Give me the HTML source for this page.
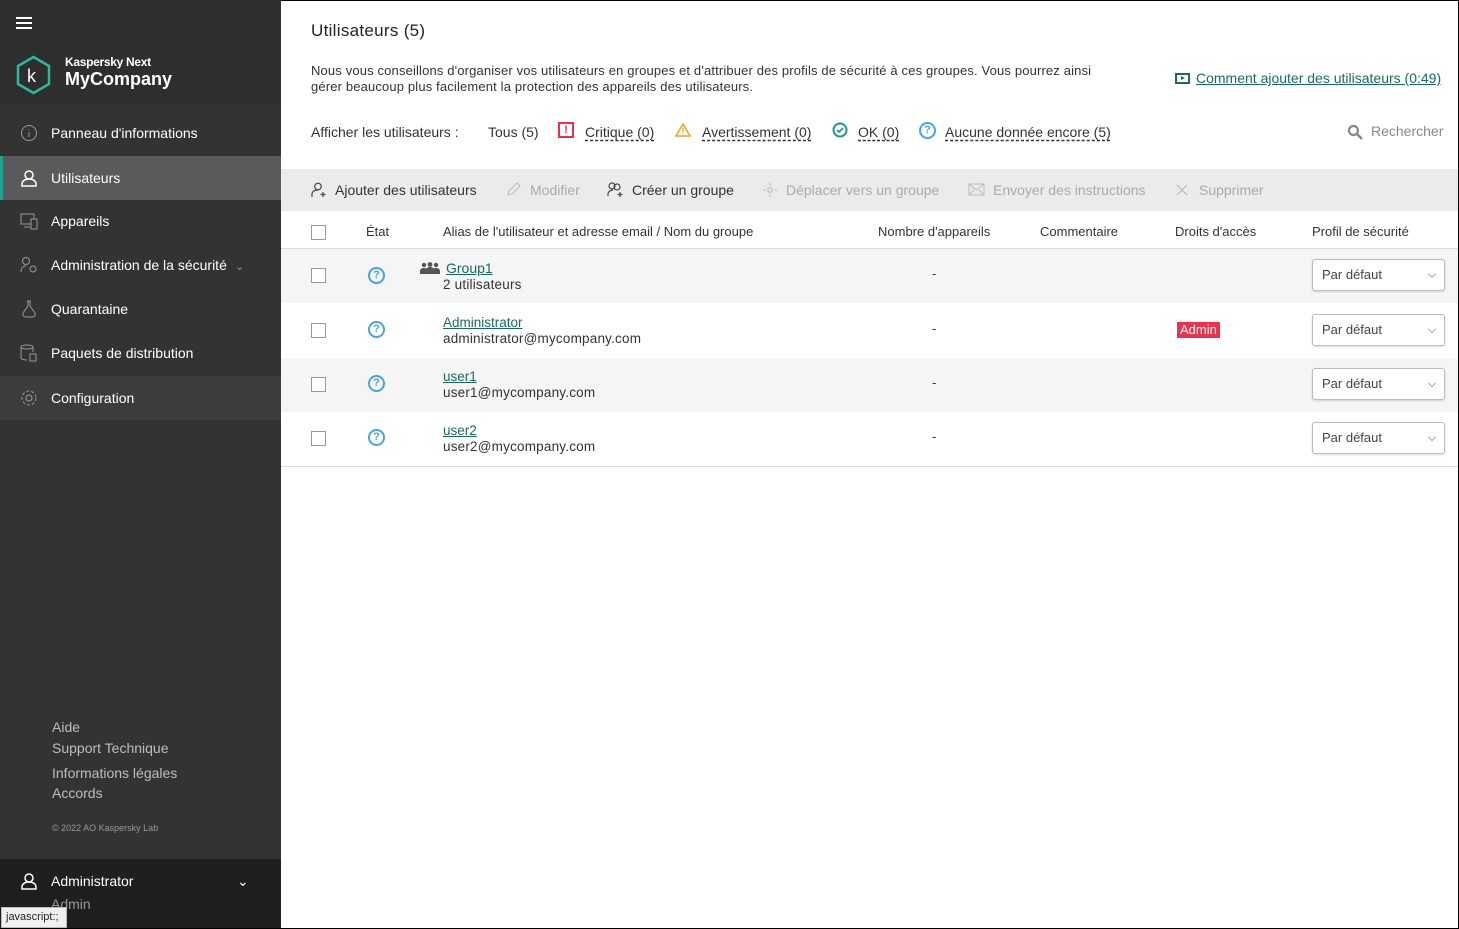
<!DOCTYPE html>
<html><head><meta charset="utf-8"><style>
*{box-sizing:border-box;margin:0;padding:0}
body{width:1459px;height:929px;overflow:hidden;font-family:"Liberation Sans",sans-serif;background:#fff;position:relative;color:#222}
.a{position:absolute}
#sb{left:0;top:0;width:281px;height:929px;background:#333}
.nav{position:absolute;left:0;width:281px;height:44px;color:#fff;font-size:14px;line-height:44px;padding-left:51px}
.nav svg{position:absolute;left:20px;top:13px}
.ft{color:#bdbdbd;font-size:14px;left:52px}
.tx{font-size:13px;color:#333;letter-spacing:.15px}
.lk{color:#1a6b5e;text-decoration:underline dashed;text-underline-offset:3px}
.tb{font-size:14px;color:#333}
.tb.d{color:#aaa}
.cb{width:15px;height:15px;border:1px solid #999;background:#fff;position:absolute;left:311px}
.q{position:absolute;left:368px;width:17px;height:17px;border:2px solid #4aa3df;border-radius:50%;color:#4aa3df;font-size:11px;font-weight:bold;text-align:center;line-height:13px}
.row{position:absolute;left:281px;width:1177px}
.sel{position:absolute;left:1312px;width:133px;height:32px;border:1px solid #bbb;border-radius:3px;background:#fff;font-size:13px;color:#444;padding-left:9px;line-height:30px;box-shadow:0 1px 2px rgba(0,0,0,.15)}
.sel:after{content:"";position:absolute;right:9px;top:11px;width:5px;height:5px;border-right:1.5px solid #aaa;border-bottom:1.5px solid #aaa;transform:rotate(45deg)}
.ul{color:#1a6b5e;text-decoration:underline;font-size:13px}
.sub{font-size:13px;color:#333}
.em{font-size:13.5px;letter-spacing:.2px;color:#333}
.ic{position:absolute}
</style></head><body>
<div id="sb" class="a">
 <div class="a" style="left:0;top:0;width:281px;height:105px;background:#2e2e2e"></div>
 <div class="a" style="left:16px;top:17px;width:16px;height:2px;background:#fff;box-shadow:0 5px 0 #fff,0 10px 0 #fff"></div>
 <svg class="a" style="left:15px;top:55px" width="37" height="40" viewBox="0 0 37 40"><polygon points="18.5,2 34,11 34,29 18.5,38 3,29 3,11" fill="none" stroke="#28b9a0" stroke-width="2.5"/><text x="12" y="27" fill="#fff" font-size="18" font-family="Liberation Sans">k</text></svg>
 <div class="a" style="left:65px;top:55px;color:#fff;font-size:12px;font-weight:bold;letter-spacing:-.3px">Kaspersky Next</div>
 <div class="a" style="left:65px;top:69px;color:#fff;font-size:18px;font-weight:bold">MyCompany</div>
 <div class="nav" style="top:111px">Panneau d'informations<svg width="18" height="18"><circle cx="9" cy="9" r="7.5" fill="none" stroke="#999"/><path d="M9 8v5M9 5v1" stroke="#999"/></svg></div>
 <div class="nav" style="top:156px;background:#5a5a5a;border-left:3px solid #1fa58e;padding-left:48px">Utilisateurs<svg width="18" height="18" style="left:17px"><circle cx="9" cy="6" r="4" fill="none" stroke="#fff" stroke-width="1.5"/><path d="M2 17v-2c0-3 3-5 7-5s7 2 7 5v2z" fill="none" stroke="#fff" stroke-width="1.5"/></svg></div>
 <div class="nav" style="top:199px">Appareils<svg width="18" height="18"><rect x="1" y="2" width="13" height="10" fill="none" stroke="#999"/><rect x="11" y="7" width="6" height="10" fill="#333" stroke="#999"/><path d="M4 15h6" stroke="#999"/></svg></div>
 <div class="nav" style="top:243px">Administration de la sécurité<span style="color:#999;margin-left:8px;font-size:11px">⌄</span><svg width="18" height="18"><circle cx="6" cy="5" r="3.5" fill="none" stroke="#999"/><path d="M1 16c0-4 2-6 5-6" fill="none" stroke="#999"/><circle cx="13" cy="13" r="3" fill="none" stroke="#999"/></svg></div>
 <div class="nav" style="top:287px">Quarantaine<svg width="18" height="18"><path d="M7 1h4M8 1v5L3 13a3 3 0 0 0 3 4h6a3 3 0 0 0 3-4L10 6V1" fill="none" stroke="#999"/></svg></div>
 <div class="nav" style="top:331px">Paquets de distribution<svg width="18" height="18"><ellipse cx="7" cy="3" rx="6" ry="2" fill="none" stroke="#999"/><path d="M1 3v11c0 1 3 2 6 2M13 3v5" fill="none" stroke="#999"/><rect x="10" y="10" width="6" height="7" fill="none" stroke="#999"/></svg></div>
 <div class="nav" style="top:376px;background:#3c3c3c">Configuration<svg width="18" height="18"><circle cx="9" cy="9" r="3" fill="none" stroke="#999"/><circle cx="9" cy="9" r="7" fill="none" stroke="#999" stroke-dasharray="3 2"/></svg></div>
 <div class="a ft" style="top:719px">Aide</div>
 <div class="a ft" style="top:740px">Support Technique</div>
 <div class="a ft" style="top:765px">Informations légales</div>
 <div class="a ft" style="top:785px">Accords</div>
 <div class="a" style="left:52px;top:823px;color:#999;font-size:9px">© 2022 AO Kaspersky Lab</div>
 <div class="a" style="left:0;top:859px;width:281px;height:70px;background:#1f1f1f"></div>
 <svg class="a" style="left:20px;top:872px" width="18" height="18"><circle cx="9" cy="6" r="4" fill="none" stroke="#fff" stroke-width="1.5"/><path d="M2 17v-2c0-3 3-5 7-5s7 2 7 5v2z" fill="none" stroke="#fff" stroke-width="1.5"/></svg>
 <div class="a" style="left:51px;top:873px;color:#fff;font-size:14px">Administrator</div>
 <div class="a" style="left:237px;top:873px;color:#fff;font-size:14px">⌄</div>
 <div class="a" style="left:51px;top:896px;color:#999;font-size:14px">Admin</div>
 <div class="a" style="left:1px;top:907px;width:66px;height:21px;background:#f0f0f0;border:1px solid #bbb;font-size:11px;color:#222;padding:3px 4px">javascript:;</div>
</div>
<div class="a" style="left:311px;top:21px;font-size:17px;color:#222;letter-spacing:.3px">Utilisateurs (5)</div>
<div class="a tx" style="left:311px;top:63px;width:860px;line-height:16px;white-space:nowrap">Nous vous conseillons d'organiser vos utilisateurs en groupes et d'attribuer des profils de sécurité à ces groupes. Vous pourrez ainsi<br>gérer beaucoup plus facilement la protection des appareils des utilisateurs.</div>
<div class="a" style="left:1175px;top:73px;width:15px;height:11px;border:2px solid #1a6b5e"></div><div class="a" style="left:1181px;top:76px;width:0;height:0;border-left:4px solid #1a6b5e;border-top:2.5px solid transparent;border-bottom:2.5px solid transparent"></div>
<div class="a ul" style="left:1196px;top:70px;font-size:14px">Comment ajouter des utilisateurs (0:49)</div>
<div class="a tb" style="left:311px;top:124px">Afficher les utilisateurs :</div>
<div class="a tb" style="left:488px;top:124px">Tous (5)</div>
<div class="a" style="left:558px;top:122px;width:16px;height:16px;border:2px solid #e8334a;color:#e8334a;font-size:11px;font-weight:bold;text-align:center;line-height:12px">!</div>
<div class="a tb lk" style="left:585px;top:124px">Critique (0)</div>
<svg class="a" style="left:675px;top:123px" width="16" height="14"><polygon points="8,1 15,13 1,13" fill="none" stroke="#e8b33a" stroke-width="1.8"/><path d="M8 5v4M8 10.5v1" stroke="#e8b33a" stroke-width="1.5"/></svg>
<div class="a tb lk" style="left:702px;top:124px">Avertissement (0)</div>
<svg class="a" style="left:832px;top:122px" width="16" height="16"><circle cx="8" cy="8" r="6.5" fill="none" stroke="#1a9a82" stroke-width="2"/><path d="M5 8l2 2 4-4" fill="none" stroke="#1a9a82" stroke-width="1.8"/></svg>
<div class="a tb lk" style="left:858px;top:124px">OK (0)</div>
<div class="q" style="left:919px;top:122px">?</div>
<div class="a tb lk" style="left:945px;top:124px">Aucune donnée encore (5)</div>
<svg class="a" style="left:1347px;top:124px" width="16" height="16"><circle cx="6.5" cy="6.5" r="4.5" fill="none" stroke="#888" stroke-width="2.2"/><path d="M10 10l5 5" stroke="#888" stroke-width="2.5"/></svg>
<div class="a" style="left:1371px;top:123px;font-size:14px;color:#888">Rechercher</div>
<div class="row" style="top:169px;height:42px;background:#ebebeb"></div>
<svg class="ic" style="left:311px;top:182px" width="16" height="16"><circle cx="7" cy="4.5" r="3.3" fill="none" stroke="#444" stroke-width="1.2"/><path d="M1 15v-3c0-2 2-4 6-4M12 10v5M9.5 12.5h5" fill="none" stroke="#444" stroke-width="1.2"/></svg>
<div class="a tb" style="left:335px;top:182px">Ajouter des utilisateurs</div>
<svg class="ic" style="left:506px;top:182px" width="15" height="15"><path d="M2 13l1-4 8-8 3 3-8 8z" fill="none" stroke="#bbb"/></svg><div class="a tb d" style="left:530px;top:182px">Modifier</div>
<svg class="ic" style="left:607px;top:182px" width="17" height="16"><circle cx="5" cy="4" r="3" fill="none" stroke="#444" stroke-width="1.2"/><circle cx="10" cy="5" r="3" fill="none" stroke="#444" stroke-width="1.2"/><path d="M1 14v-2c0-2 2-4 5-4M13 10v5M10.5 12.5h5" fill="none" stroke="#444" stroke-width="1.2"/></svg>
<div class="a tb" style="left:632px;top:182px">Créer un groupe</div>
<svg class="ic" style="left:762px;top:182px" width="16" height="16"><rect x="6" y="6" width="4" height="4" fill="none" stroke="#bbb"/><path d="M8 1v3M8 12v3M1 8h3M12 8h3" stroke="#bbb"/></svg><div class="a tb d" style="left:786px;top:182px">Déplacer vers un groupe</div>
<svg class="ic" style="left:968px;top:183px" width="17" height="13"><rect x="1" y="1" width="15" height="11" fill="none" stroke="#bbb"/><path d="M1 1l7.5 6L16 1M1 12l5-5M16 12l-5-5" fill="none" stroke="#bbb"/></svg><div class="a tb d" style="left:993px;top:182px">Envoyer des instructions</div>
<svg class="ic" style="left:1176px;top:184px" width="12" height="12"><path d="M1 1l10 10M11 1L1 11" stroke="#bbb" stroke-width="1.2"/></svg><div class="a tb d" style="left:1199px;top:182px">Supprimer</div>
<div class="cb" style="top:225px"></div>
<div class="a sub" style="left:366px;top:224px">État</div>
<div class="a sub" style="left:443px;top:224px">Alias de l'utilisateur et adresse email / Nom du groupe</div>
<div class="a sub" style="left:878px;top:224px">Nombre d'appareils</div>
<div class="a sub" style="left:1040px;top:224px">Commentaire</div>
<div class="a sub" style="left:1175px;top:224px">Droits d'accès</div>
<div class="a sub" style="left:1312px;top:224px">Profil de sécurité</div>
<div class="row" style="top:248px;height:1px;background:#d8dde2"></div>
<div class="row" style="top:249px;height:54px;background:#f5f5f5"></div>
<div class="row" style="top:358px;height:54px;background:#f5f5f5"></div>
<div class="row" style="top:466px;height:1px;background:#d8dde2"></div>
<div class="cb" style="top:268px"></div><div class="q" style="top:267px">?</div>
<svg class="ic" style="left:420px;top:262px" width="20" height="12"><circle cx="4" cy="3" r="2.2" fill="#555"/><circle cx="10" cy="2.5" r="2.4" fill="#555"/><circle cx="16" cy="3" r="2.2" fill="#555"/><path d="M0 12v-3c0-2 2-3 4-3s4 1 4 3v3zM6 12V8c0-2 2-3 4-3s4 1 4 3v4zM12 12V9c0-2 2-3 4-3s4 1 4 3v3z" fill="#555"/></svg>
<div class="a ul" style="left:446px;top:260px;font-size:14px">Group1</div><div class="a em" style="left:443px;top:277px">2 utilisateurs</div>
<div class="a sub" style="left:932px;top:266px">-</div><div class="sel" style="top:259px">Par défaut</div>
<div class="cb" style="top:323px"></div><div class="q" style="top:321px">?</div>
<div class="a ul" style="left:443px;top:315px;font-size:13.5px">Administrator</div><div class="a em" style="left:443px;top:331px">administrator@mycompany.com</div>
<div class="a sub" style="left:932px;top:321px">-</div>
<div class="a" style="left:1177px;top:322px;background:#e8334a;color:#fff;font-size:13px;padding:0 3px;line-height:16px">Admin</div>
<div class="sel" style="top:314px">Par défaut</div>
<div class="cb" style="top:377px"></div><div class="q" style="top:375px">?</div>
<div class="a ul" style="left:443px;top:369px;font-size:13.5px">user1</div><div class="a em" style="left:443px;top:385px">user1@mycompany.com</div>
<div class="a sub" style="left:932px;top:375px">-</div><div class="sel" style="top:368px">Par défaut</div>
<div class="cb" style="top:431px"></div><div class="q" style="top:429px">?</div>
<div class="a ul" style="left:443px;top:423px;font-size:13.5px">user2</div><div class="a em" style="left:443px;top:439px">user2@mycompany.com</div>
<div class="a sub" style="left:932px;top:429px">-</div><div class="sel" style="top:422px">Par défaut</div>
<div class="a" style="left:1458px;top:0;width:1px;height:929px;background:#000"></div>
<div class="a" style="left:0;top:928px;width:1459px;height:1px;background:#000"></div>
<div class="a" style="left:281px;top:0;width:1178px;height:1px;background:#000"></div>
</body></html>
